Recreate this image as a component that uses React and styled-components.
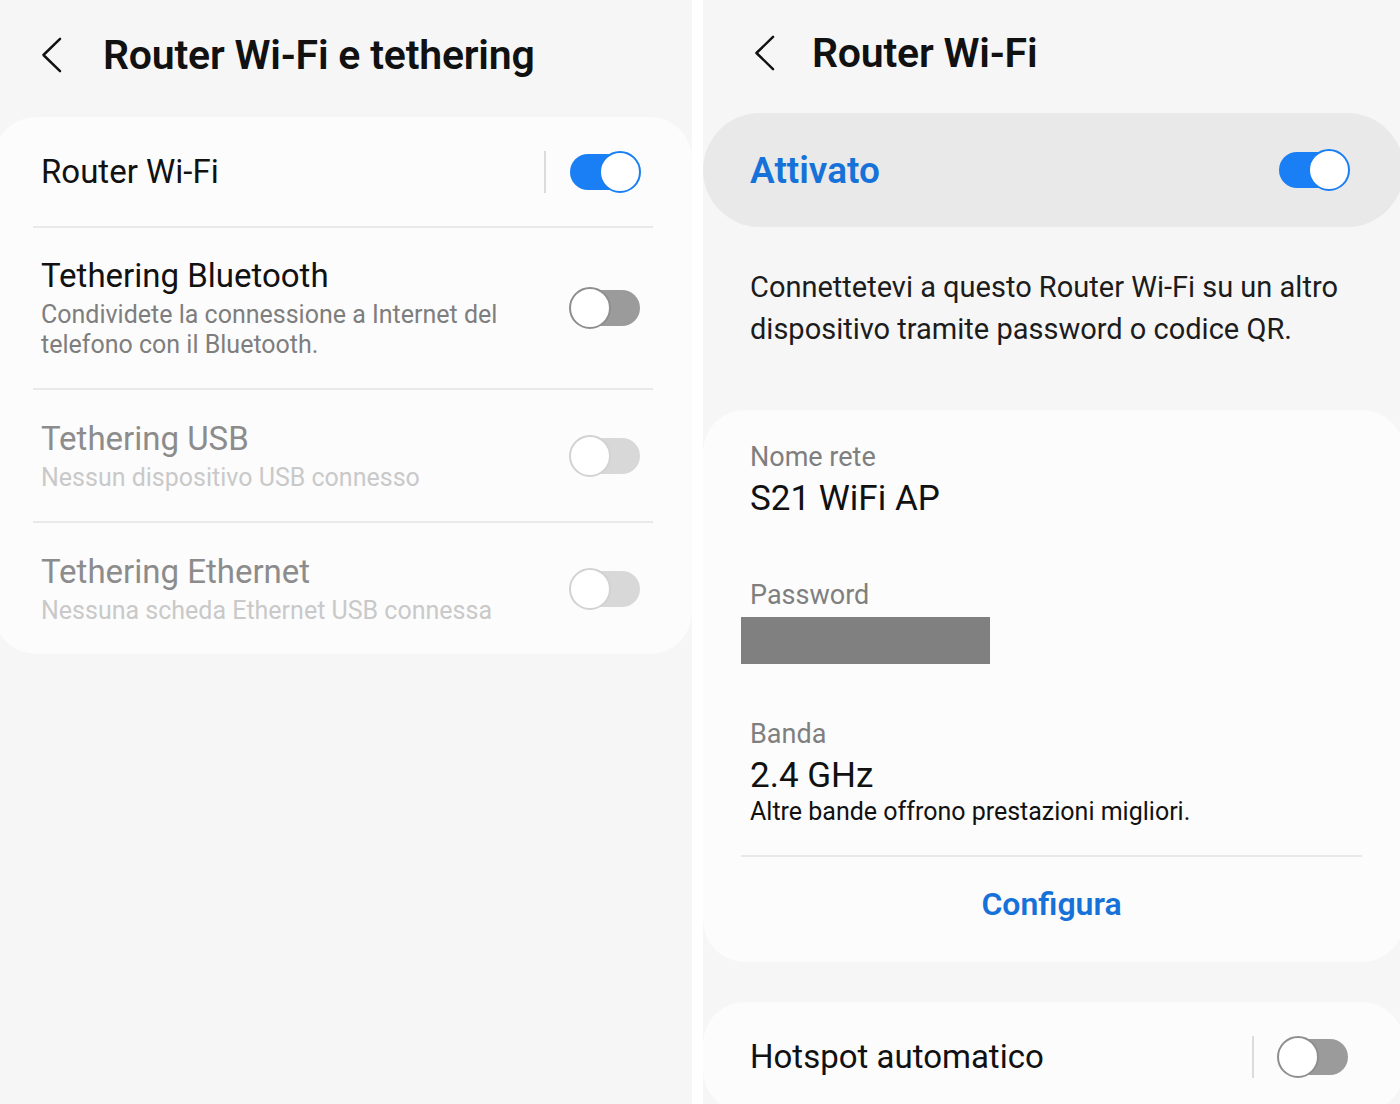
import React from 'react'
import styled, { createGlobalStyle } from 'styled-components'

const GlobalStyle = createGlobalStyle`
  html, body {
    margin: 0;
    padding: 0;
    background: #ffffff;
  }
  body {
    font-family: Roboto, "Noto Sans", "Liberation Sans", sans-serif;
    color: #111111;
  }
  * {
    box-sizing: border-box;
  }
`

function BackIcon() {
    return (
        <Back viewBox="0 0 24 38" fill="none">
            <path d="M21 2 L3.5 19 L21 36" stroke="#111" strokeWidth="2.6" strokeLinecap="round" strokeLinejoin="round" />
        </Back>
    )
}

function Toggle({ on, disabled }) {
    return (
        <Track $on={on} $disabled={disabled}>
            <Thumb $on={on} $disabled={disabled} />
        </Track>
    )
}

export default function App() {
    return (
        <Page>
            <GlobalStyle />

            <Screen>
                <Header $h={117} $left={40} $gap={40}>
                    <BackIcon />
                    <Title>Router Wi-Fi e tethering</Title>
                </Header>

                <Card className='left'>
                    <Row $h={109}>
                        <RowText>
                            <RowTitle>Router Wi-Fi</RowTitle>
                        </RowText>
                        <VLine />
                        <Toggle on />
                    </Row>
                    <Divider />
                    <Row $h={160}>
                        <RowText>
                            <RowTitle>Tethering Bluetooth</RowTitle>
                            <RowSub>Condividete la connessione a Internet del telefono con il Bluetooth.</RowSub>
                        </RowText>
                        <Toggle />
                    </Row>
                    <Divider />
                    <Row $h={131}>
                        <RowText>
                            <RowTitle $muted>Tethering USB</RowTitle>
                            <RowSub $muted>Nessun dispositivo USB connesso</RowSub>
                        </RowText>
                        <Toggle disabled />
                    </Row>
                    <Divider />
                    <Row $h={131}>
                        <RowText>
                            <RowTitle $muted>Tethering Ethernet</RowTitle>
                            <RowSub $muted>Nessuna scheda Ethernet USB connessa</RowSub>
                        </RowText>
                        <Toggle disabled />
                    </Row>
                </Card>
            </Screen>

            <Screen>
                <Header $h={113} $left={50} $gap={36}>
                    <BackIcon />
                    <Title>Router Wi-Fi</Title>
                </Header>

                <MasterBar>
                    <MasterLabel>Attivato</MasterLabel>
                    <Toggle on />
                </MasterBar>

                <Description>
                    Connettetevi a questo Router Wi-Fi su un altro dispositivo tramite password o codice QR.
                </Description>

                <Card className='right'>
                    <Field>
                        <FieldLabel>Nome rete</FieldLabel>
                        <FieldValue>S21 WiFi AP</FieldValue>
                    </Field>
                    <Field $top={55}>
                        <FieldLabel>Password</FieldLabel>
                        <Redacted />
                    </Field>
                    <Field $top={52}>
                        <FieldLabel>Banda</FieldLabel>
                        <FieldValue $small>2.4 GHz</FieldValue>
                        <FieldNote>Altre bande offrono prestazioni migliori.</FieldNote>
                    </Field>
                    <Divider className='wide' />
                    <ActionButton>Configura</ActionButton>
                </Card>

                <Card className='right last'>
                    <Row $h={110} $right={56}>
                        <RowText>
                            <RowTitle>Hotspot automatico</RowTitle>
                        </RowText>
                        <VLine />
                        <Toggle />
                    </Row>
                </Card>
            </Screen>
        </Page>
    )
}

const Page = styled.div`
  width: 1400px;
  height: 1104px;
  display: flex;
  gap: 11px;
  overflow: hidden;
  background: #ffffff;
`

const Screen = styled.div`
  flex: 1;
  height: 100%;
  display: flex;
  flex-direction: column;
  background: #f6f6f6;
  overflow: hidden;

  &:first-child {
    flex: 0 0 692px;
  }
`

const Header = styled.div`
  height: ${({ $h }) => $h}px;
  flex-shrink: 0;
  display: flex;
  align-items: center;
  padding-left: ${({ $left }) => $left}px;
  padding-bottom: 7px;
  gap: ${({ $gap }) => $gap}px;
`

const Back = styled.svg`
  width: 23px;
  height: 36px;
  flex-shrink: 0;
`

const Title = styled.h1`
  margin: 0;
  font-size: 41px;
  font-weight: 600;
  letter-spacing: -0.2px;
  color: #111;
  white-space: nowrap;
`

const Card = styled.div`
  flex-shrink: 0;
  display: flex;
  flex-direction: column;
  background: #fcfcfc;
  border-radius: 42px;

  &.left {
    margin-left: -6px;
    width: calc(100% + 6px);
  }

  &.right {
    margin-top: 60px;
    width: calc(100% + 4px);
    padding: 29px 0 36px;
  }

  &.last {
    margin-top: 40px;
    padding: 0;
  }
`

const Row = styled.div`
  height: ${({ $h }) => $h}px;
  display: flex;
  align-items: center;
  padding: 0 ${({ $right }) => $right || 52}px 0 47px;
`

const RowText = styled.div`
  flex: 1;
  display: flex;
  flex-direction: column;
  padding-right: 60px;
`

const RowTitle = styled.div`
  font-size: 33px;
  line-height: 40px;
  color: ${({ $muted }) => ($muted ? '#8c8c8c' : '#111')};
  white-space: nowrap;
`

const RowSub = styled.div`
  margin-top: 4px;
  font-size: 25px;
  line-height: 30px;
  color: ${({ $muted }) => ($muted ? '#c9c9c9' : '#7e7e7e')};
`

const VLine = styled.div`
  width: 2px;
  height: 42px;
  background: #dcdcdc;
  margin-right: 24px;
  flex-shrink: 0;
`

const Divider = styled.div`
  height: 2px;
  background: #e9e9e9;
  margin: 0 39px;
  flex-shrink: 0;

  &.wide {
    margin: 29px 42px 0 38px;
  }
`

const Track = styled.div`
  width: 70px;
  height: 36px;
  border-radius: 18px;
  display: flex;
  align-items: center;
  justify-content: ${({ $on }) => ($on ? 'flex-end' : 'flex-start')};
  background: ${({ $on, $disabled }) => ($on ? '#1a7ff4' : $disabled ? '#d8d8d8' : '#9b9b9b')};
  flex-shrink: 0;
`

const Thumb = styled.div`
  width: 42px;
  height: 42px;
  border-radius: 50%;
  background: #ffffff;
  margin: 0 -1px;
  flex-shrink: 0;
  border: 2.5px solid ${({ $on, $disabled }) => ($on ? '#1a7ff4' : $disabled ? '#d2d2d2' : '#8e8e8e')};
`

const MasterBar = styled.div`
  height: 114px;
  flex-shrink: 0;
  display: flex;
  align-items: center;
  justify-content: space-between;
  padding: 0 55px 0 47px;
  background: #e9e9e9;
  border-radius: 57px;
  width: calc(100% + 4px);
`

const MasterLabel = styled.div`
  font-size: 37px;
  font-weight: 600;
  color: #1672d8;
`

const Description = styled.p`
  margin: 39px 30px 0 47px;
  font-size: 29px;
  line-height: 42px;
  color: #1c1c1c;
`

const Field = styled.div`
  display: flex;
  flex-direction: column;
  align-items: flex-start;
  padding: 0 47px;
  margin-top: ${({ $top }) => $top || 0}px;
`

const FieldLabel = styled.div`
  font-size: 27px;
  line-height: 36px;
  color: #7f7f7f;
`

const FieldValue = styled.div`
  font-size: 35px;
  line-height: ${({ $small }) => ($small ? '44px' : '46px')};
  margin-top: ${({ $small }) => ($small ? '2px' : '1px')};
  color: #111;
`

const FieldNote = styled.div`
  font-size: 25px;
  line-height: 28px;
  color: #111;
`

const Redacted = styled.div`
  width: 249px;
  height: 47px;
  margin: 4px 0 0 -9px;
  background: #808080;
`

const ActionButton = styled.div`
  margin-top: 25px;
  text-align: center;
  font-size: 32px;
  line-height: 44px;
  font-weight: 600;
  color: #1672d8;
  padding-right: 4px;
`
